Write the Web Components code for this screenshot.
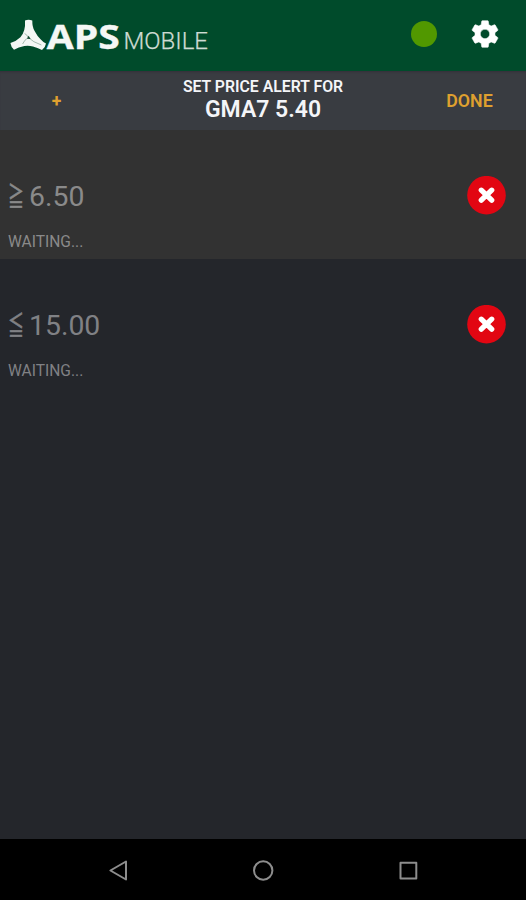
<!DOCTYPE html>
<html lang="en">
<head>
<meta charset="utf-8">
<title>APS Mobile</title>
<style>
html,body{margin:0;height:100%;background:#24262b}
body{font-family:Roboto,"Liberation Sans",sans-serif}
</style>
</head>
<body>
<aps-app></aps-app>
<script>
const define = (name, html) => customElements.define(name, class extends HTMLElement {
  constructor() {
    super();
    const t = document.createElement('template');
    t.innerHTML = html;
    this.attachShadow({ mode: 'open' }).append(t.content.cloneNode(true));
  }
});

define('aps-logo', `
<style>:host{display:block;width:200px;height:69px}svg{display:block}</style>
<svg width="200" height="69" viewBox="10 0 200 69">
  <path fill="#f4f7f5" d="M25 20.4Q28.5 19.2 32.3 20.4Q32.2 27 34.6 31Q37.2 36.2 40.8 39.4Q42.8 41.8 46 43.4Q45.4 47.4 42 50Q37.4 47.4 33 46.4Q28.6 45.4 24.4 46Q18.4 47 14 49.8Q11 47.2 10.4 43Q16 41.4 20.4 37.2Q25.8 31 25 20.4Z"/>
  <path fill="none" stroke="#6d9080" stroke-width=".6" d="M24.6 33.6Q27 34.4 28.2 37.4Q33 42.2 41.4 45M28.2 37.6Q24.6 39.6 22.6 44"/>
  <path fill="#12482f" d="M28.6 35.8L30.6 39L27 38.8Z"/>
  <text x="46.8" y="48.8" font-family="Open Sans, sans-serif" font-weight="700" font-size="34.4" fill="#f4f7f5" stroke="#f4f7f5" stroke-width=".4" textLength="73" lengthAdjust="spacingAndGlyphs">APS</text>
  <text x="123.5" y="49.2" font-family="Roboto, sans-serif" font-weight="300" font-size="23.8" fill="#cfdbd3" stroke="#cfdbd3" stroke-width=".25" textLength="84.5" lengthAdjust="spacingAndGlyphs">MOBILE</text>
</svg>`);

define('status-dot', `<style>:host{display:block;width:26px;height:26px;border-radius:50%;background:#519800}</style>`);

define('gear-icon', `
<style>:host{display:block;width:32px;height:32px}svg{display:block}</style>
<svg width="32" height="32" viewBox="0 0 24 24"><path fill="#fff" stroke="#fff" stroke-width=".4" d="M19.43 12.98c.04-.32.07-.64.07-.98s-.03-.66-.07-.98l2.11-1.65c.19-.15.24-.42.12-.64l-2-3.46c-.12-.22-.39-.3-.61-.22l-2.49 1c-.52-.4-1.08-.73-1.69-.98l-.38-2.65C14.46 2.18 14.25 2 14 2h-4c-.25 0-.46.18-.49.42l-.38 2.65c-.61.25-1.17.59-1.69.98l-2.49-1c-.23-.09-.49 0-.61.22l-2 3.46c-.13.22-.07.49.12.64l2.11 1.65c-.04.32-.07.65-.07.98s.03.66.07.98l-2.11 1.65c-.19.15-.24.42-.12.64l2 3.46c.12.22.39.3.61.22l2.49-1c.52.4 1.08.73 1.69.98l.38 2.65c.03.24.24.42.49.42h4c.25 0 .46-.18.49-.42l.38-2.65c.61-.25 1.17-.59 1.69-.98l2.49 1c.23.09.49 0 .61-.22l2-3.46c.12-.22.07-.49-.12-.64l-2.11-1.65zM12 15.5c-1.93 0-3.5-1.57-3.5-3.5s1.57-3.5 3.5-3.5 3.5 1.57 3.5 3.5-1.57 3.5-3.5 3.5z"/></svg>`);

define('app-header', `
<style>
:host{display:flex;align-items:center;height:71px;box-sizing:border-box;padding:0 25px 2px 10px;background:#004b2b}
.actions{display:flex;align-items:center;gap:32px;margin-left:auto;padding-bottom:1px}
</style>
<aps-logo></aps-logo><div class="actions"><status-dot></status-dot><gear-icon></gear-icon></div>`);

define('title-bar', `
<style>
:host{display:grid;grid-template-columns:113px 1fr 113px;align-items:center;height:59px;background:#393c41;color:#f4f5f8;text-align:center;font-weight:600;box-sizing:border-box;box-shadow:inset 0 2px 2px -1px #343039}
.side{color:#dfa02f;font-size:17.8px;font-weight:600;line-height:20px;padding-top:1px}
.plus{font-size:17.6px;font-weight:700}
.small{font-size:15.8px;line-height:20px;margin-top:-2px}
.big{font-size:23px;line-height:24px;margin-top:1px}
</style>
<div class="side plus">+</div>
<div><div class="small"><slot name="label"></slot></div><div class="big"><slot name="symbol"></slot></div></div>
<div class="side">DONE</div>`);

define('delete-button', `
<style>:host{display:block;width:39px;height:39px}svg{display:block}</style>
<svg width="39" height="39" viewBox="0 0 39 39"><circle cx="19.5" cy="19.2" r="19.3" fill="#e20612"/><path d="M14.3 14.2L24.7 24.2M24.7 14.2L14.3 24.2" stroke="#fff" stroke-width="5.3" stroke-linecap="round"/></svg>`);

define('alert-row', `
<style>
:host{display:flex;height:129px;box-sizing:border-box;padding:47px 20px 0 8px;justify-content:space-between;background:var(--row);color:var(--ink)}
.value{display:flex;height:40px;align-items:center;font-size:28.4px;line-height:40px}
.op{display:block;width:21px;height:40px;font-family:"Noto Sans CJK JP",sans-serif;font-size:29px}
.op span{display:inline-block;transform:translateY(-2.5px) scale(.55,.92);transform-origin:0 50%;-webkit-text-stroke:.7px}
.state{font-size:15.6px;line-height:20px;margin-top:15px}
delete-button{margin-top:-1px}
</style>
<div><div class="value"><span class="op"><span><slot name="op"></slot></span></span><slot></slot></div><div class="state"><slot name="state"></slot></div></div>
<delete-button></delete-button>`);

define('nav-bar', `
<style>:host{display:flex;justify-content:center;height:61px;background:#000}svg{display:block}</style>
<svg width="310" height="61" viewBox="108 839 310 61" fill="none" stroke="#8d8d8d" stroke-width="2">
<path d="M126 861.5V879.5L110.4 870.5Z" stroke-linejoin="round"/><circle cx="263.2" cy="870.5" r="9.2"/><rect x="400.5" y="862.7" width="15.8" height="15.8" stroke-linejoin="round"/></svg>`);

define('aps-app', `
<style>
:host{display:flex;flex-direction:column;width:526px;height:900px;overflow:hidden;background:#24262b}
main{flex:1}
.first{--row:#323232;--ink:#8a8a8a}
.second{--row:#24262b;--ink:#808185}
</style>
<app-header></app-header>
<title-bar><span slot="label">SET PRICE ALERT FOR</span><span slot="symbol">GMA7 5.40</span></title-bar>
<main>
<alert-row class="first"><span slot="op">≧</span>6.50<span slot="state">WAITING...</span></alert-row>
<alert-row class="second"><span slot="op">≦</span>15.00<span slot="state">WAITING...</span></alert-row>
</main>
<nav-bar></nav-bar>`);
</script>
</body>
</html>
